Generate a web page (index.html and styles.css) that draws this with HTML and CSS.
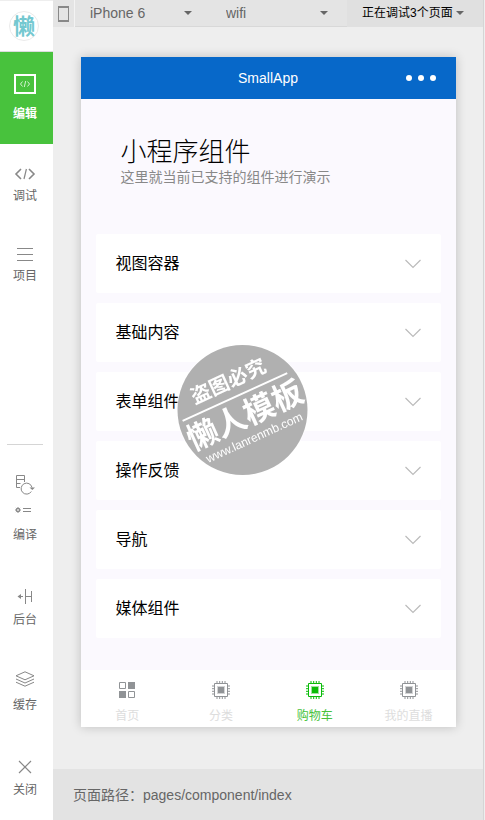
FILE: index.html
```html
<!DOCTYPE html>
<html lang="zh-CN">
<head>
    <meta charset="UTF-8">
    <meta name="viewport" content="width=device-width, initial-scale=1.0">
    <title>SmallApp</title>
    <link rel="stylesheet" href="styles.css">
</head>
<body>

    <div class="sidebar">
        <div class="logo">
            <svg width="30" height="30" viewBox="0 0 30 30">
                <circle cx="15" cy="15" r="14.5" fill="#fff" stroke="#eaeaea"/>
                <text class="logo-text" x="4" y="23">懒</text>
            </svg>
        </div>

        <button class="side-item active">
            <svg width="24" height="24" viewBox="0 0 24 24" fill="none">
                <rect x="2" y="3" width="20" height="18" stroke="#fff" stroke-width="2"/>
                <path d="M9.500 9.500L7.500 12l2 2.500M14.500 9.500l2 2.500-2 2.500M12.700 9l-1.400 6" stroke="#d5f3d2"/>
            </svg>
            <span>编辑</span>
        </button>
        <button class="side-item">
            <svg width="24" height="20" viewBox="0 0 24 20" fill="none" stroke="#888">
                <path d="M8 5L3 10l5 5M16 5l5 5-5 5" stroke-width="1.6"/>
                <path d="M13.400 5l-2.400 10" stroke-width="1.2"/>
            </svg>
            <span>调试</span>
        </button>
        <button class="side-item">
            <svg width="24" height="20" viewBox="0 0 24 20" stroke="#888">
                <path d="M4 4.500h16M4 10.500h16M4 16.500h16"/>
            </svg>
            <span>项目</span>
        </button>

        <div class="side-bottom">
            <button class="side-item compile">
                <svg width="24" height="42" viewBox="0 0 24 42" fill="none" stroke="#888">
                    <path d="M7 13.500H3.500V1.500h8V8M3.500 5.500h8M3.500 9.500h4"/>
                    <path d="M18.300 17.500A5.500 5.500 0 1 1 19 13.500"/>
                    <path d="M16.500 13.500h5.500l-2.700 2.500z" fill="#888" stroke="none"/>
                    <circle cx="5" cy="36" r="1.700" fill="#ccc"/>
                    <path d="M5 33v1.200M5 37.800V39M2 36h1.200M6.800 36H8M2.900 33.900l.8.800M6.300 37.300l.8.800M7.100 33.900l-.8.800M3.700 37.300l-.8.800"/>
                    <path d="M10 34.500h8M10 37.500h8"/>
                </svg>
                <span>编译</span>
            </button>
            <button class="side-item">
                <svg width="24" height="20" viewBox="0 0 24 20" fill="none" stroke="#888">
                    <path d="M12.500 3v15M18.500 5v11M13 10.500h5.500M6 10.500h4"/>
                    <path d="M4.500 10.500l3.500-2.500v5z" fill="#888" stroke="none"/>
                </svg>
                <span>后台</span>
            </button>
            <button class="side-item">
                <svg width="24" height="20" viewBox="0 0 24 20" fill="none" stroke="#888">
                    <path d="M12 .8l9 4-9 4-9-4z"/>
                    <path d="M3 8l9 4 9-4M3 11.200l9 4 9-4"/>
                </svg>
                <span>缓存</span>
            </button>
            <button class="side-item">
                <svg width="24" height="20" viewBox="0 0 24 20" stroke="#888" stroke-width="1.200">
                    <path d="M6 5l12 12M18 5L6 17"/>
                </svg>
                <span>关闭</span>
            </button>
        </div>
    </div>

    <div class="main">
        <div class="toolbar">
            <button class="device" aria-label="设备">
                <svg width="11" height="16" viewBox="0 0 11 16" fill="none">
                    <path d="M.5 1.500h10v13H.5z" stroke="#888"/>
                    <path d="M0 1h11M0 15h11" stroke="#888" stroke-width="2"/>
                </svg>
            </button>
            <div class="picker">
                <select aria-label="机型"><option>iPhone 6</option></select>
            </div>
            <div class="picker">
                <select aria-label="网络"><option>wifi</option></select>
            </div>
            <div class="picker pages">
                <select aria-label="页面"><option>正在调试3个页面</option></select>
            </div>
        </div>

        <div class="stage">
            <div class="phone">
                <div class="phone-header">
                    <span></span>
                    <span>SmallApp</span>
                    <button class="more" aria-label="更多">
                        <svg width="32" height="8" viewBox="0 0 32 8" fill="#fff">
                            <circle cx="4" cy="4" r="3"/>
                            <circle cx="16" cy="4" r="3"/>
                            <circle cx="28" cy="4" r="3"/>
                        </svg>
                    </button>
                </div>

                <div class="phone-body">
                    <h1>小程序组件</h1>
                    <p>这里就当前已支持的组件进行演示</p>
                    <div class="list">
                        <button class="card"><span>视图容器</span> <svg class="arrow"><use href="#down"/></svg></button>
                        <button class="card"><span>基础内容</span> <svg class="arrow"><use href="#down"/></svg></button>
                        <button class="card"><span>表单组件</span> <svg class="arrow"><use href="#down"/></svg></button>
                        <button class="card"><span>操作反馈</span> <svg class="arrow"><use href="#down"/></svg></button>
                        <button class="card"><span>导航</span> <svg class="arrow"><use href="#down"/></svg></button>
                        <button class="card"><span>媒体组件</span> <svg class="arrow"><use href="#down"/></svg></button>
                    </div>
                </div>

                <div class="tabbar">
                    <button class="tab">
                        <svg class="tab-icon" viewBox="0 0 20 20">
                            <path d="M2.500 2.500h6v6h-6zM11.500 11.500h6v6h-6z" fill="#fff" stroke="#909396"/>
                            <path d="M11 2h7v7h-7zM2 11h7v7H2z" fill="#909396"/>
                        </svg>
                        <span>首页</span>
                    </button>
                    <button class="tab">
                        <svg class="tab-icon"><use href="#chip"/></svg>
                        <span>分类</span>
                    </button>
                    <button class="tab on">
                        <svg class="tab-icon"><use href="#chip"/></svg>
                        <span>购物车</span>
                    </button>
                    <button class="tab">
                        <svg class="tab-icon"><use href="#chip"/></svg>
                        <span>我的直播</span>
                    </button>
                </div>
            </div>
        </div>

        <div class="path">页面路径：pages/component/index</div>
    </div>

    <!-- watermark -->
    <svg class="watermark" width="135" height="134" viewBox="0 0 135 134">
        <circle cx="67" cy="67" r="66" fill="#fff" fill-opacity=".6"/>
        <circle cx="67" cy="67" r="65" fill="#b0b0b0"/>
        <g transform="rotate(-24.500 67 67)" fill="#fff">
            <text class="mark-small" x="26" y="42">盗图必究</text>
            <path d="M8 51h115v2H8z"/>
            <text class="mark-big" x="5" y="84">懒人模板</text>
            <text class="mark-url" x="14" y="101">www.lanrenmb.com</text>
        </g>
    </svg>

    <!-- shared icons -->
    <svg class="defs">
        <symbol id="down" viewBox="0 0 18 10">
            <path d="M1.500 1L9 8.500 16.500 1" fill="none" stroke="#bbb" stroke-width="1.200"/>
        </symbol>
        <symbol id="chip" viewBox="0 0 20 20">
            <path d="M3.500 3.500h13v13h-13z" fill="#fff" stroke="currentColor"/>
            <path d="M6 6h8v8H6z" fill="currentColor" opacity=".4"/>
            <path d="M7 7h6v6H7z" fill="currentColor"/>
            <path d="M6 1v2M8.700 1v2M11.300 1v2M14 1v2M6 17v2M8.700 17v2M11.300 17v2M14 17v2M1 6h2M1 8.700h2M1 11.300h2M1 14h2M17 6h2M17 8.700h2M17 11.300h2M17 14h2" stroke="currentColor"/>
        </symbol>
    </svg>

</body>
</html>
```

FILE: styles.css
```css
* {
    box-sizing: border-box;
}
body {
    margin: 0;
    display: flex;
    min-height: 100vh;
    background-color: #eee;
    font-family: "Liberation Sans", "Noto Sans CJK SC", sans-serif;
    font-size: 14px;
    color: #666;
}
button, select {
    border: none;
    background: none;
    margin: 0;
    padding: 0;
    font: inherit;
    color: inherit;
    cursor: pointer;
}
svg {
    display: block;
}

/* sidebar */
.sidebar {
    width: 53px;
    flex-shrink: 0;
    display: flex;
    flex-direction: column;
    background-color: #fff;
    border-top: 1px solid #eee;
}
.logo {
    height: 51px;
    padding: 10px 9px;
    border-bottom: 1px solid #ddd;
}
.logo-text {
    font-size: 22px;
    font-weight: bold;
    fill: #74c8d0;
}
.side-item {
    display: flex;
    flex-direction: column;
    align-items: center;
    padding: 20px 3px 16px 0;
    font-size: 12px;
    line-height: 24px;
}
.side-item.active {
    gap: 6px;
    padding-bottom: 18px;
    background-color: #48c23d;
    color: #fff;
    font-weight: bold;
}
.side-bottom {
    display: flex;
    flex-direction: column;
    gap: 39px;
    margin-top: auto;
    padding-bottom: 18px;
}
.side-bottom .side-item {
    gap: 2px;
    padding-top: 0;
    padding-bottom: 0;
}
.side-bottom .compile {
    gap: 7px;
}
.side-bottom::before {
    content: "";
    height: 1px;
    margin: 0 10px -10px 7px;
    background-color: #d5d5d5;
}

/* main area */
.main {
    flex: 1;
    display: flex;
    flex-direction: column;
    margin-right: 1px;
    border-right: 1px solid #d5d5d5;
}
.toolbar {
    display: flex;
    height: 27px;
    background-color: #e4e4e4;
}
.device {
    display: flex;
    align-items: center;
    width: 22px;
    padding-left: 5px;
    border-right: 1px solid #f3f3f3;
}
.picker {
    flex: 1;
    display: grid;
    align-items: center;
    border-bottom: 1px solid #d8d8d8;
}
.picker select {
    grid-area: 1 / 1;
    appearance: none;
    height: 26px;
    padding-left: 15px;
}
.picker::after {
    content: "";
    grid-area: 1 / 1;
    justify-self: end;
    margin-right: 19px;
    border: 4px solid transparent;
    border-top-color: #666;
    border-bottom: none;
    pointer-events: none;
}
.pages {
    background-color: #e0e0e0;
    border-bottom-color: #e0e0e0;
}
.pages select {
    font-size: 12px;
    color: #000;
}
.stage {
    flex: 1;
    display: flex;
    justify-content: center;
    padding: 30px 27px 42px;
}
.phone {
    flex: 1;
    max-width: 375px;
    display: flex;
    flex-direction: column;
    background-color: #fbf9fe;
    box-shadow: 0 0 10px rgba(0, 0, 0, 0.2);
}
.phone-header {
    display: grid;
    grid-template-columns: 1fr auto 1fr;
    align-items: center;
    height: 42px;
    padding: 0 19px;
    background-color: #0768c9;
    color: #fff;
}
.more {
    justify-self: end;
}
.phone-body {
    flex: 1;
    padding: 38px 15px 32px;
}
.phone-body h1 {
    margin: 0;
    padding-left: 25px;
    font-size: 26px;
    font-weight: 300;
    line-height: 30px;
    color: #000;
}
.phone-body p {
    margin: 0;
    padding-left: 25px;
    line-height: 20px;
    color: #888;
}
.list {
    display: flex;
    flex-direction: column;
    gap: 10px;
    margin-top: 47px;
}
.card {
    display: flex;
    align-items: center;
    justify-content: space-between;
    height: 59px;
    padding: 0 19px 0 20px;
    border-radius: 2px;
    background-color: #fff;
    font-size: 16px;
    color: #000;
}
.card span {
    padding-bottom: 3px;
}
.arrow {
    width: 18px;
    height: 10px;
}
.tabbar {
    display: flex;
    height: 57px;
    background-color: #fff;
}
.tab {
    flex: 1;
    display: flex;
    flex-direction: column;
    align-items: center;
    gap: 6px;
    padding-top: 10px;
    font-size: 12px;
    line-height: 20px;
    color: #ddd;
}
.tab-icon {
    width: 20px;
    height: 20px;
    flex-shrink: 0;
    color: #909396;
}
.tab.on {
    color: #48c23d;
}
.tab.on .tab-icon {
    color: #09bb07;
}
.path {
    padding: 16px 20px 15px;
    line-height: 20px;
    background-color: #e3e3e3;
}

/* watermark */
.watermark {
    position: fixed;
    top: 50%;
    left: 50%;
    transform: translate(-50%, -50%);
    pointer-events: none;
}
.mark-small {
    font-size: 20px;
    font-weight: bold;
}
.mark-big {
    font-size: 31px;
    font-weight: bold;
}
.mark-url {
    font-size: 12px;
}
.defs {
    position: absolute;
    width: 0;
    height: 0;
}
```
